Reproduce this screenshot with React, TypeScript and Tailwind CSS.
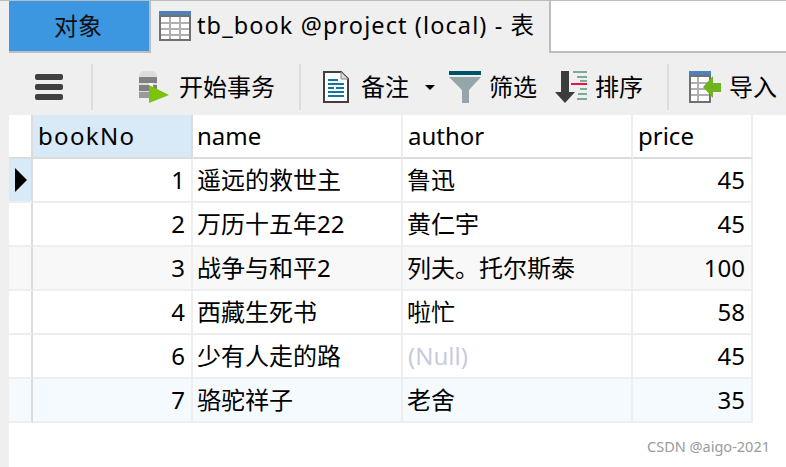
import React from "react";

const font = { fontFamily: '"Noto Sans", "Noto Sans CJK SC", sans-serif' };

const rows = [
  { id: 1, name: "遥远的救世主", author: "鲁迅", price: 45, bg: "bg-white" },
  { id: 2, name: "万历十五年22", author: "黄仁宇", price: 45, bg: "bg-white" },
  { id: 3, name: "战争与和平2", author: "列夫。托尔斯泰", price: 100, bg: "bg-[#f8f8f8]" },
  { id: 4, name: "西藏生死书", author: "啦忙", price: 58, bg: "bg-white" },
  { id: 6, name: "少有人走的路", author: null, price: 45, bg: "bg-white" },
  { id: 7, name: "骆驼祥子", author: "老舍", price: 35, bg: "bg-[#f5faff]" },
];

function TableIcon() {
  return (
    <svg width="32" height="30" viewBox="0 0 32 30" className="shrink-0">
      <rect x="0" y="0" width="32" height="6" fill="#4f81bd" />
      <rect x="1" y="5" width="30" height="24" fill="#fff" stroke="#707070" strokeWidth="2" />
      <path d="M2 12h28M2 18h28M2 24h28" stroke="#b0b0b0" strokeWidth="2" />
      <path d="M11 6v22M21 6v22" stroke="#b0b0b0" strokeWidth="2" />
    </svg>
  );
}

function MenuIcon() {
  return (
    <svg width="28" height="28" viewBox="0 0 28 28">
      <rect x="0" y="1" width="28" height="6" rx="2" fill="#404040" />
      <rect x="0" y="11" width="28" height="6" rx="2" fill="#404040" />
      <rect x="0" y="21" width="28" height="6" rx="2" fill="#404040" />
    </svg>
  );
}

function TransactionIcon() {
  return (
    <svg width="32" height="32" viewBox="0 0 32 32">
      <rect x="0" y="0" width="18" height="26" rx="5" fill="#dcdcdc" />
      <rect x="0" y="6" width="18" height="6" fill="#808080" />
      <rect x="0" y="14" width="18" height="6" fill="#808080" />
      <rect x="0" y="21" width="10" height="6" fill="#9a9a9a" />
      <path d="M10 12h4v4h-4z" fill="#fff" />
      <path d="M10 14 L30 24 L10 32 Z" fill="#7dc30a" />
    </svg>
  );
}

function NoteIcon() {
  return (
    <svg width="26" height="32" viewBox="0 0 26 32">
      <path d="M1 1h17l7 7v23H1z" fill="#fff" stroke="#404040" strokeWidth="2" />
      <path d="M18 1v7h7" fill="#ddd" stroke="#888" strokeWidth="1" />
      <path d="M5 9h10M5 13h16M5 17h6M13 17h8M5 21h16M5 25h16" stroke="#0f77a0" strokeWidth="2.2" />
    </svg>
  );
}

function FilterIcon() {
  return (
    <svg width="32" height="32" viewBox="0 0 32 32">
      <rect x="0" y="0" width="32" height="4" fill="#025268" />
      <path d="M0 6h32L20 19v13h-7V19z" fill="#94a6aa" />
    </svg>
  );
}

function SortIcon() {
  return (
    <svg width="32" height="32" viewBox="0 0 32 32">
      <path d="M6 0h8v21h6l-10 11L0 21h6z" fill="#3c3c3c" />
      <path d="M18 1h14M22 6h10M25 10h7M25 18h7M23 23h9M22 28h10" stroke="#7cac98" strokeWidth="2" />
      <path d="M16 13h16" stroke="#ee1144" strokeWidth="2" />
    </svg>
  );
}

function ImportIcon() {
  return (
    <svg width="32" height="32" viewBox="0 0 32 32">
      <rect x="0" y="0" width="22" height="5" fill="#4f81bd" />
      <rect x="1" y="5" width="20" height="26" fill="#fff" stroke="#707070" strokeWidth="2" />
      <path d="M2 12h18M2 18h18M2 24h18" stroke="#b0b0b0" strokeWidth="2" />
      <path d="M9 6v24" stroke="#b0b0b0" strokeWidth="2" />
      <path d="M14 16l10-11v7h8v9h-8v6z" fill="#6fb320" />
    </svg>
  );
}

function Divider() {
  return <div className="h-[46px] w-[2px] shrink-0 bg-[#dcdcdc]" />;
}

function Cell({ className, children }: { className?: string; children?: React.ReactNode }) {
  return (
    <div className={`flex h-[44px] items-center border-r-2 border-b-2 border-[#eeeeee] text-[24px] whitespace-nowrap text-black ${className ?? ""}`}>
      {children}
    </div>
  );
}

export default function App() {
  return (
    <div className="flex h-[467px] w-[786px] flex-col overflow-hidden bg-[#efefef]" style={font}>
      {/* tab strip */}
      <div className="flex h-[53px] shrink-0 border-t border-[#bdbdbd] pl-[9px]">
        <div className="flex w-[142px] items-center justify-center border-r-2 border-b-2 border-[#bdbdbd] bg-[#3d96e0] pr-[2px] text-[24px] text-[#111]">
          对象
        </div>
        <div className="flex w-[398px] items-center gap-[6px] pb-[2px] pl-[8px] text-[24px] leading-none text-black">
          <TableIcon />
          <span className="whitespace-nowrap text-[23.5px] tracking-[1.1px]">tb_book @project (local) - 表</span>
        </div>
        <div className="flex-1 border-b-2 border-l-2 border-[#bdbdbd] bg-white" />
      </div>

      {/* toolbar */}
      <div className="flex h-[62px] shrink-0 items-center pt-[6px] pl-[35px] text-[24px] whitespace-nowrap text-black">
        <MenuIcon />
        <div className="ml-[28px]"><Divider /></div>
        <div className="ml-[46px] flex items-center gap-[8px]">
          <TransactionIcon />
          <span>开始事务</span>
        </div>
        <div className="ml-[24px]"><Divider /></div>
        <div className="ml-[22px] flex items-center gap-[12px]">
          <NoteIcon />
          <span>备注</span>
          <span className="ml-[4px] h-0 w-0 border-x-[5px] border-t-[5px] border-x-transparent border-t-black" />
        </div>
        <div className="ml-[14px] flex items-center gap-[8px]">
          <FilterIcon />
          <span>筛选</span>
        </div>
        <div className="ml-[18px] flex items-center gap-[8px]">
          <SortIcon />
          <span>排序</span>
        </div>
        <div className="ml-[24px]"><Divider /></div>
        <div className="ml-[20px] flex items-center gap-[8px]">
          <ImportIcon />
          <span>导入</span>
        </div>
      </div>

      {/* table */}
      <div className="ml-[9px] flex-1 bg-white">
        <div className="grid w-[744px] grid-cols-[24px_160px_210px_230px_120px]">
          <Cell className="border-r-[#dcdcdc] border-b-[#dcdcdc]" />
          <Cell className="border-r-[#dcdcdc] border-b-[#dcdcdc] bg-[#d8e9f8] pl-[5px] tracking-[1.35px]">bookNo</Cell>
          <Cell className="border-b-[#dcdcdc] pl-[4px]">name</Cell>
          <Cell className="border-b-[#dcdcdc] pl-[5px]">author</Cell>
          <Cell className="border-b-[#dcdcdc] pl-[5px]">price</Cell>
          {rows.map((row, i) => (
            <React.Fragment key={row.id}>
              <Cell className={`border-r-[#dcdcdc] ${i === 0 ? "bg-[#d8e9f8]" : row.bg}`}>
                {i === 0 && (
                  <span className="ml-[6px] h-0 w-0 border-y-[12px] border-l-[12px] border-y-transparent border-l-black" />
                )}
              </Cell>
              <Cell className={`justify-end pr-[6px] ${row.bg}`}>{row.id}</Cell>
              <Cell className={`pl-[4px] ${row.bg}`}>{row.name}</Cell>
              <Cell className={`pl-[4px] ${row.bg}`}>
                {row.author ?? <span className="ml-[1px] text-[#c8cbdc]">(Null)</span>}
              </Cell>
              <Cell className={`justify-end pr-[6px] ${row.bg}`}>{row.price}</Cell>
            </React.Fragment>
          ))}
        </div>
        <div className="mt-[13px] w-[761px] text-right text-[14.5px] text-[#9a9a9a]">CSDN @aigo-2021</div>
      </div>
    </div>
  );
}
